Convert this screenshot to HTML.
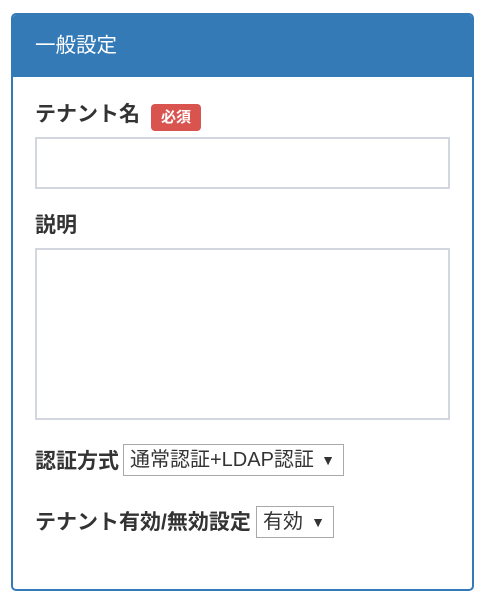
<!DOCTYPE html>
<html><head><meta charset="utf-8"><style>
body{margin:0;background:#fff;font-family:"Liberation Sans","Noto Sans CJK JP",sans-serif;color:#333}
.panel{position:absolute;left:11px;top:13px;width:459px;height:574px;border:2px solid #337ab7;border-radius:5px;overflow:hidden}
.hd{position:absolute;left:0;top:0;right:0;height:62px;background:#337ab7;color:#fff;font-size:20.5px;line-height:62px;padding-left:22px}
.a{position:absolute;font-weight:bold;font-size:21px;line-height:26px;white-space:nowrap}
.badge{position:absolute;left:138px;top:89px;width:50px;height:27px;background:#d9534f;border-radius:4px;color:#fff;font-size:15px;font-weight:bold;text-align:center;line-height:27px}
.box{position:absolute;border:2px solid #d2d6de;box-sizing:border-box;background:#fff}
.sel{position:absolute;border:1px solid #a9a9a9;box-sizing:border-box;font-size:20px;line-height:31px;padding-left:6px;white-space:nowrap;background:#fff}
.sel span{position:absolute;right:8px;font-size:14px;top:0}
</style></head><body>
<div class="panel">
<div class="hd">一般設定</div>
<div class="a" style="left:22px;top:87px">テナント名</div>
<div class="badge">必須</div>
<div class="box" style="left:22px;top:122px;width:415px;height:52px"></div>
<div class="a" style="left:22px;top:198px">説明</div>
<div class="box" style="left:22px;top:233px;width:415px;height:172px"></div>
<div class="a" style="left:22px;top:434px">認証方式</div>
<div class="sel" style="left:110px;top:429px;width:221px;height:32px">通常認証+LDAP認証<span>▼</span></div>
<div class="a" style="left:22px;top:495px">テナント有効/無効設定</div>
<div class="sel" style="left:243px;top:491px;width:78px;height:32px">有効<span>▼</span></div>
</div>
</body></html>
